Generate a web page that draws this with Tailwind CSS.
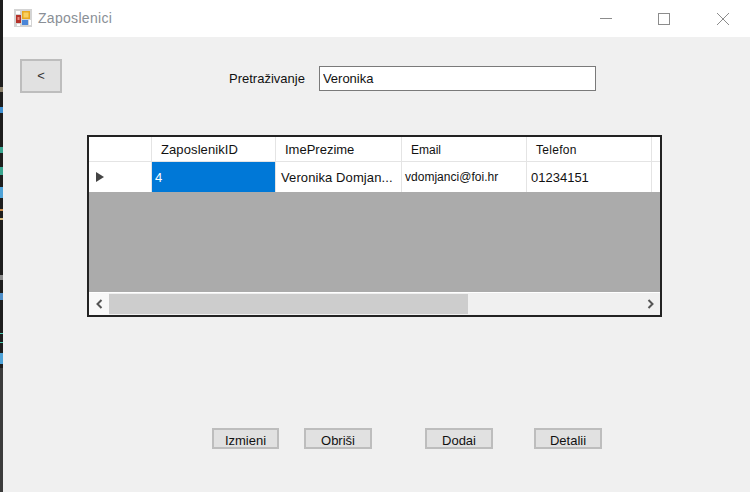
<!DOCTYPE html>
<html lang="en">
<head>
  <meta charset="UTF-8" />
  <title>Zaposlenici</title>
  <script src="https://cdn.jsdelivr.net/npm/@tailwindcss/browser@4"></script>
</head>
<body class="w-[750px] h-[492px] overflow-hidden flex bg-[#f0f0f0] font-['Liberation_Sans',Arial,sans-serif] text-[13px] text-[#111]">

  <!-- Editor showing behind the window -->
  <div class="w-[3px] h-full bg-[#1e1e1e] flex flex-col shrink-0">
    <div class="h-[5px] mt-[87px] bg-[#8a7f6a]"></div>
    <div class="h-[6px] mt-[15px] bg-[#3f8fd0]"></div>
    <div class="h-[6px] mt-[34px] bg-[#3aa58f]"></div>
    <div class="h-[8px] mt-[14px] bg-[#3aa58f]"></div>
    <div class="h-[11px] mt-[12px] bg-[#4fa3d8]"></div>
    <div class="h-[2px] mt-[11px] bg-[#c98a4a]"></div>
    <div class="h-[2px] mt-[7px] bg-[#d7ba7d]"></div>
    <div class="h-[5px] mt-[55px] bg-[#8a8a8a]"></div>
    <div class="h-[7px] mt-[13px] bg-[#4f8fc9]"></div>
    <div class="h-px mt-[33px] bg-[#4ec9b0]"></div>
    <div class="h-px mt-[8px] bg-[#4ec9b0]"></div>
    <div class="h-[11px] mt-[10px] bg-[#4fa3d8]"></div>
    <div class="flex-1 mt-[4px] bg-[#3c3c3c]"></div>
  </div>

  <div class="flex-1 flex flex-col">
    <!-- Title bar -->
    <div class="h-[37px] bg-white flex items-center shrink-0">
      <svg class="ml-[11px] -mt-[2px] w-[18px] h-[18px]" viewBox="0 0 18 18">
        <rect width="18" height="18" fill="#d4d4d4"/>
        <rect x="2" y="2" width="4" height="3" fill="#fff"/>
        <rect x="2" y="6" width="5" height="8" fill="#b5322a"/>
        <rect x="3.5" y="8" width="2" height="3" fill="#e88a80"/>
        <rect x="8" y="2" width="8" height="8" fill="#e8a820"/>
        <rect x="9.5" y="3.5" width="5" height="5" fill="#f8d060"/>
        <rect x="8" y="11" width="6" height="5" fill="#4a86d8"/>
        <rect x="15" y="11" width="2" height="5" fill="#fff"/>
        <rect x="3" y="15" width="3" height="2" fill="#fff"/>
      </svg>
      <span class="ml-[6px] text-[14px] text-[#8a8f96] tracking-[0.3px]">Zaposlenici</span>
      <div class="ml-auto flex items-center text-[#8c8c8c]">
        <svg class="w-[12px] h-[12px]" viewBox="0 0 12 12"><path d="M0 5.5H12" stroke="currentColor" fill="none"/></svg>
        <svg class="ml-[46px] w-[12px] h-[12px]" viewBox="0 0 12 12"><rect x="0.5" y="0.5" width="11" height="11" stroke="currentColor" fill="none"/></svg>
        <svg class="ml-[47px] mr-[21px] w-[12px] h-[12px]" viewBox="0 0 12 12"><path d="M0 0L12 12M12 0L0 12" stroke="currentColor" fill="none"/></svg>
      </div>
    </div>

    <!-- Form body -->
    <div class="flex-1 flex flex-col">
      <div class="flex items-center mt-[22px]">
        <button class="ml-[17px] w-[42px] h-[34px] bg-[#e1e1e1] border-2 border-[#bdbdbd] text-[#333]">&lt;</button>
        <span class="ml-[167px] mt-[5px] whitespace-nowrap">Pretraživanje</span>
        <input value="Veronika" class="ml-[14px] mt-[5px] w-[277px] h-[25px] bg-white border border-[#7a7a7a] px-[3px] outline-none" />
      </div>

      <!-- Grid -->
      <div class="ml-[84px] mt-[42px] w-[575px] h-[182px] border-2 border-[#222] bg-[#ababab] flex flex-col">
        <div class="grid grid-cols-[62px_123px_125px_124px_124px_1fr] grid-rows-[24px] gap-x-px h-[25px] bg-[#e4e4e4] pb-px shrink-0">
          <div class="bg-white"></div>
          <div class="bg-white pl-[9px] pt-px leading-[24px] tracking-[0.1px]">ZaposlenikID</div>
          <div class="bg-white pl-[9px] pt-px leading-[24px]">ImePrezime</div>
          <div class="bg-white pl-[9px] pt-px leading-[24px] text-[12px]">Email</div>
          <div class="bg-white pl-[9px] pt-px leading-[24px] text-[12px] tracking-[0.3px]">Telefon</div>
          <div class="bg-white"></div>
        </div>
        <div class="grid grid-cols-[62px_123px_125px_124px_124px_1fr] grid-rows-[30px] gap-x-px h-[30px] bg-[#e4e4e4] shrink-0">
          <div class="bg-white flex items-center pl-[7px]">
            <svg class="w-[8px] h-[10px]" viewBox="0 0 8 10"><path d="M0 0L8 5L0 10Z" fill="#444"/></svg>
          </div>
          <div class="bg-[#0078d7] text-white pl-[3px] pt-px leading-[29px]">4</div>
          <div class="bg-white pl-[5px] pt-px leading-[29px] whitespace-nowrap overflow-hidden tracking-[0.1px]">Veronika Domjan...</div>
          <div class="bg-white pl-[3px] pt-px leading-[29px] whitespace-nowrap overflow-hidden text-[12px] tracking-[0.02px]">vdomjanci@foi.hr</div>
          <div class="bg-white pl-[4px] pt-px leading-[29px]">01234151</div>
          <div class="bg-white"></div>
        </div>
        <div class="flex-1"></div>
        <!-- Horizontal scrollbar -->
        <div class="h-[23px] border-t border-white bg-[#f0f0f0] flex items-stretch shrink-0">
          <div class="w-[20px] bg-[#f8f8f8] flex items-center justify-center">
            <svg class="w-[8px] h-[10px]" viewBox="0 0 8 10"><path d="M6.5 1L2.5 5L6.5 9" stroke="#555" stroke-width="2" fill="none"/></svg>
          </div>
          <div class="w-[359px] my-px bg-[#cdcdcd]"></div>
          <div class="flex-1 flex items-center justify-end pr-[5px]">
            <svg class="w-[8px] h-[10px]" viewBox="0 0 8 10"><path d="M1.5 1L5.5 5L1.5 9" stroke="#555" stroke-width="2" fill="none"/></svg>
          </div>
        </div>
      </div>

      <!-- Actions: the j tails are cut off at the baseline, as in the original form -->
      <div class="flex mt-[111px] ml-[209px]">
        <button class="w-[67px] h-[21px] bg-[#e1e1e1] border-2 border-[#bdbdbd] flex items-center justify-center"><span class="mt-[1px] h-[11px] leading-[13px] overflow-hidden">Izmjeni</span></button>
        <button class="ml-[25px] w-[68px] h-[21px] bg-[#e1e1e1] border-2 border-[#bdbdbd] flex items-center justify-center"><span class="mt-[1px] h-[11px] leading-[13px]">Obriši</span></button>
        <button class="ml-[53px] w-[68px] h-[21px] bg-[#e1e1e1] border-2 border-[#bdbdbd] flex items-center justify-center"><span class="mt-[1px] h-[11px] leading-[13px] overflow-hidden">Dodaj</span></button>
        <button class="ml-[41px] w-[68px] h-[21px] bg-[#e1e1e1] border-2 border-[#bdbdbd] flex items-center justify-center"><span class="mt-[1px] h-[11px] leading-[13px] overflow-hidden">Detalji</span></button>
      </div>
    </div>
  </div>
</body>
</html>
